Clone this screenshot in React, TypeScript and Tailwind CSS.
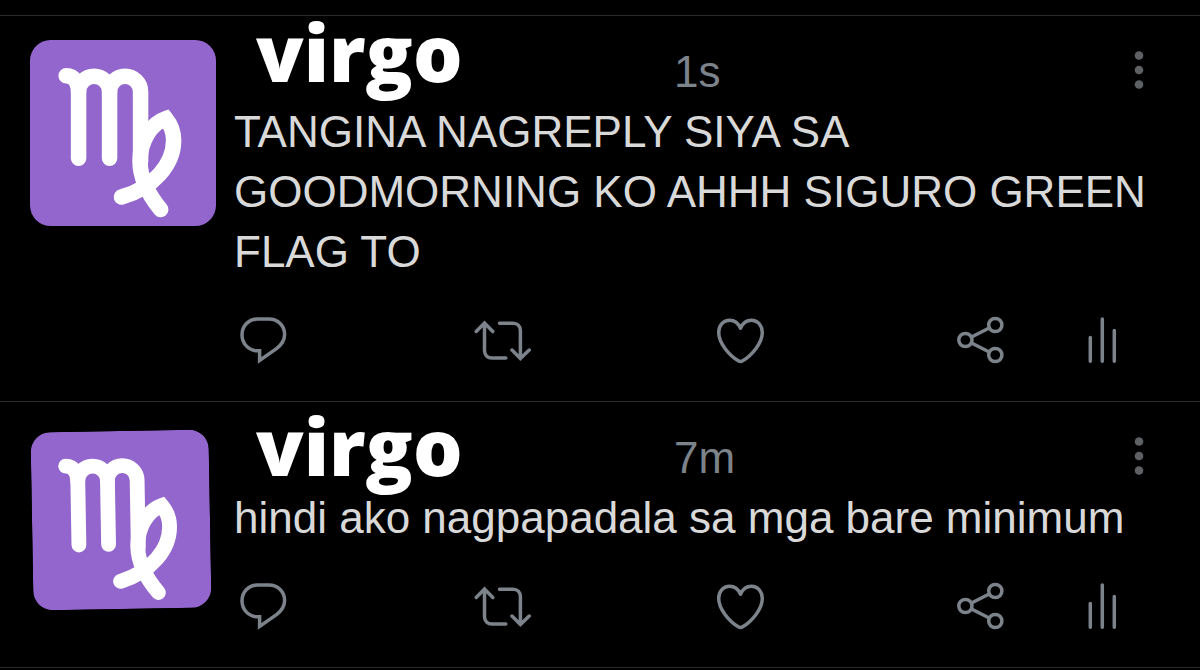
import type { ReactNode } from "react";

interface Tweet {
  id: number;
  name: string;
  time: string;
  text: string;
  tilted?: boolean;
}

const tweets: Tweet[] = [
  {
    id: 1,
    name: "virgo",
    time: "1s",
    text: "TANGINA NAGREPLY SIYA SA GOODMORNING KO AHHH SIGURO GREEN FLAG TO",
  },
  {
    id: 2,
    name: "virgo",
    time: "7m",
    text: "hindi ako nagpapadala sa mga bare minimum",
    tilted: true,
  },
];

const VirgoAvatar = ({ className }: { className: string }) => (
  <svg viewBox="0 0 36 36" className={className} role="img" aria-label="virgo">
    <rect width="36" height="36" rx="4" fill="#9266cc" />
    <g fill="none" stroke="#fff" strokeWidth="3" strokeLinecap="round">
      <path d="M7 6.9C8.6 6.9 9.4 8.4 9.4 10.2V22.9" />
      <path d="M9.4 10a3 3 0 0 1 6 0V22.9" />
      <path d="M15.4 10a3 3 0 0 1 6 0V23.5" />
      <path d="M17.7 30.4C24 28.6 27.8 24 27.8 19.4C27.8 17.8 27.2 16.3 26.3 15.2C23.4 16.2 21.3 19.5 21.3 23.5C21.3 26.8 23 30 25.3 32.8" />
    </g>
  </svg>
);

const ActionIcon = ({ children }: { children: ReactNode }) => (
  <svg
    viewBox="0 0 60 60"
    className="size-[60px]"
    fill="none"
    stroke="currentColor"
    strokeWidth="3.5"
    strokeLinecap="round"
    aria-hidden="true"
  >
    {children}
  </svg>
);

const TweetActions = () => (
  <div className="flex items-center pt-[29px] pb-[30px] pr-[67px] text-[#7c838a]">
    <div className="flex flex-1 justify-between">
      <button type="button" aria-label="Reply">
        <ActionIcon>
          <path d="M23.5 8H35C44 8 50.6 15 50.6 23.5C50.6 29.3 47.5 33.8 42.5 37.6L25.6 49.5V39.8H23.5C14.8 39.8 8 32.7 8 23.8S14.8 8 23.5 8Z" />
        </ActionIcon>
      </button>
      <button type="button" aria-label="Repost">
        <ActionIcon>
          <path d="M3.2 20.5L11.5 12L19.8 20.5M11.5 12V39.5C11.5 44 14.5 47 19 47H32.8" />
          <path d="M26.5 12.2H40C44.5 12.2 47.4 15.2 47.4 19.7V47.5M39 39L47.4 47.5L56.2 39" />
        </ActionIcon>
      </button>
      <button type="button" aria-label="Like">
        <ActionIcon>
          <path
            strokeLinejoin="round"
            d="M29.5 17.2C27.5 12.5 23.5 9.2 18.5 9.2C12.5 9.2 7.7 14.2 7.7 21.5C7.7 31.5 17.5 44 27.3 49.8C28.7 50.6 30.3 50.6 31.7 49.8C41.5 44 51.3 31.5 51.3 21.5C51.3 14.2 46.5 9.2 40.5 9.2C35.5 9.2 31.5 12.5 29.5 17.2Z"
          />
        </ActionIcon>
      </button>
      <button type="button" aria-label="Share">
        <ActionIcon>
          <circle cx="15.4" cy="29" r="6.6" />
          <circle cx="45.3" cy="14" r="6.6" />
          <circle cx="45.3" cy="44" r="6.6" />
          <path d="M21.5 26L39.2 17M21.5 32L39.2 41" />
        </ActionIcon>
      </button>
    </div>
    <button type="button" aria-label="View activity" className="ml-[63px]">
      <ActionIcon>
        <path d="M17.3 26.5V50.2M29.3 8V50.2M41.3 19.5V50.2" />
      </ActionIcon>
    </button>
  </div>
);

const TweetCard = ({ tweet }: { tweet: Tweet }) => (
  <article className="flex border-t border-[#2a2b2d] pl-[30px]">
    <div className={tweet.tilted ? "w-[204px] shrink-0 pt-[29px] pl-0.5" : "w-[204px] shrink-0 pt-6"}>
      <VirgoAvatar className={tweet.tilted ? "size-[178px] -rotate-1" : "size-[186px]"} />
    </div>

    <div className="min-w-0 flex-1">
      {/* Name, time and menu */}
      <header className="flex h-[86px] items-start pr-[49px]">
        <h2
          className={`w-[440px] pl-[22px] font-['Open_Sans',sans-serif] text-[78px] leading-[72px] font-extrabold text-white ${
            tweet.tilted ? "pt-2" : ""
          }`}
        >
          {tweet.name}
        </h2>
        <time className="pt-[26px] text-[44px] leading-[60px] text-[#7c838a]">{tweet.time}</time>
        <button type="button" aria-label="More" className="mt-[34px] ml-auto text-[#5d6163]">
          <svg viewBox="0 0 24 40" className="h-10 w-6" fill="currentColor" aria-hidden="true">
            <circle cx="12" cy="5.5" r="4.3" />
            <circle cx="12" cy="20" r="4.3" />
            <circle cx="12" cy="34.5" r="4.3" />
          </svg>
        </button>
      </header>

      <p className="pr-10 text-[44px] leading-[60px] text-[#d9d9d9]">{tweet.text}</p>

      <TweetActions />
    </div>
  </article>
);

export default function App() {
  return (
    <main className="min-h-screen bg-black pt-[15px] font-['Liberation_Sans',Arial,sans-serif]">
      <div className="border-b border-[#2a2b2d]">
        {tweets.map((tweet) => (
          <TweetCard key={tweet.id} tweet={tweet} />
        ))}
      </div>
    </main>
  );
}
